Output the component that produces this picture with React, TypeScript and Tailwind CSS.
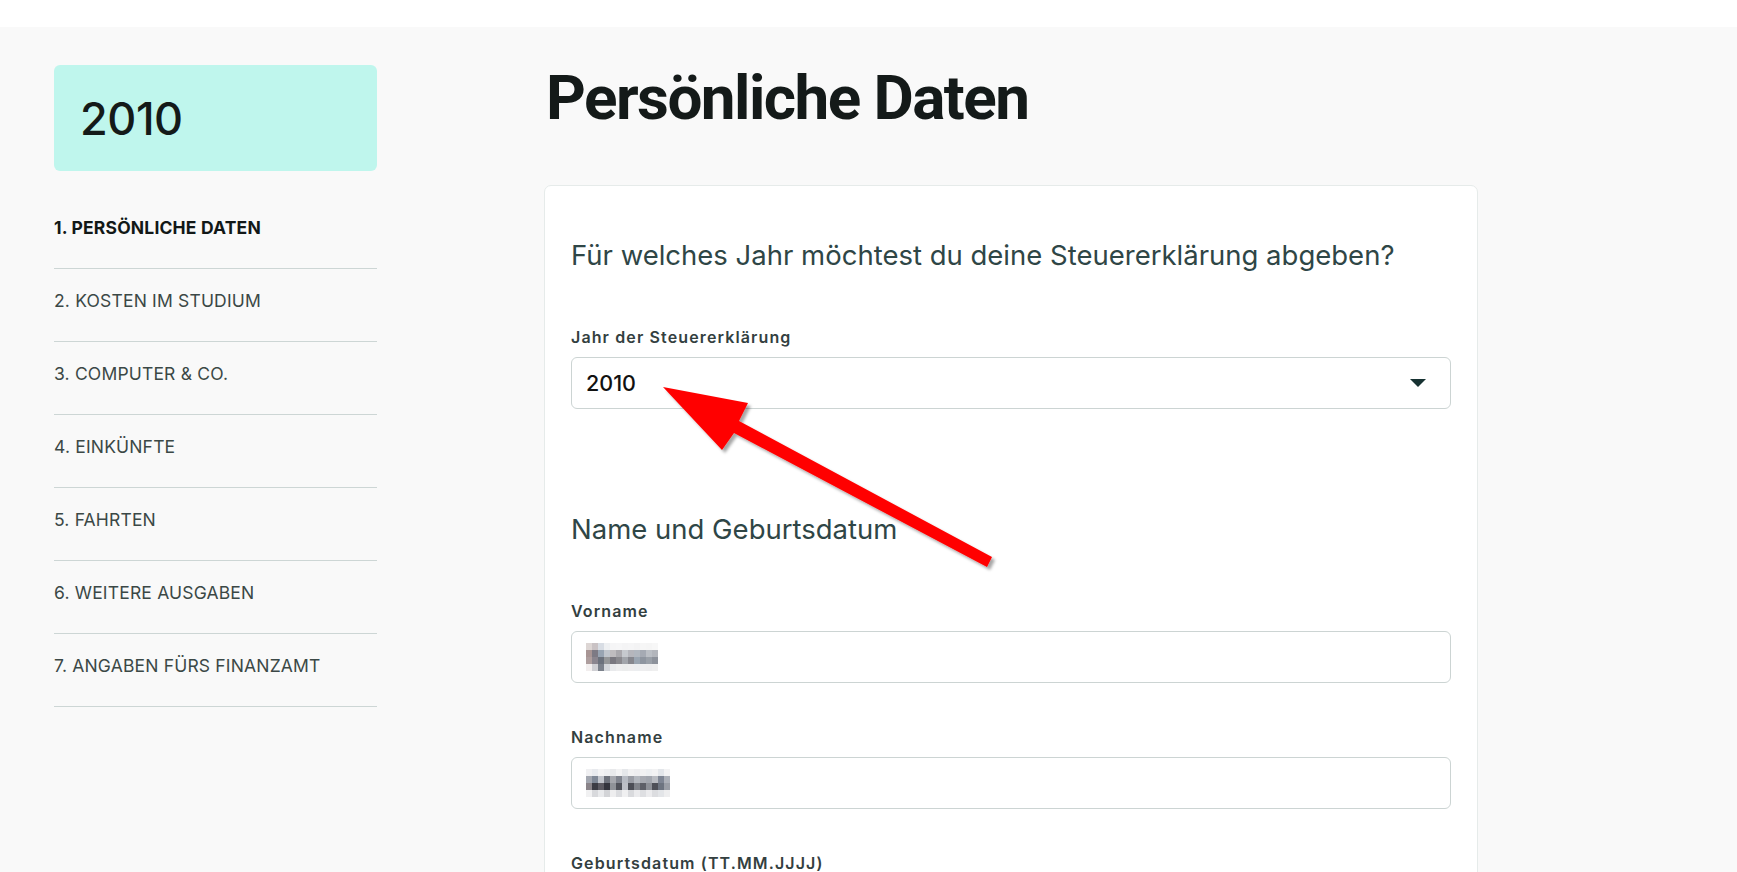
import React from 'react';

const NAV_ITEMS = [
  '1. PERSÖNLICHE DATEN',
  '2. KOSTEN IM STUDIUM',
  '3. COMPUTER & CO.',
  '4. EINKÜNFTE',
  '5. FAHRTEN',
  '6. WEITERE AUSGABEN',
  '7. ANGABEN FÜRS FINANZAMT',
];

// pixel mosaic over the blurred-out names
const MOSAIC_A = [
  ['#ddd6d4', '#c9c2c4', '#d8dde4', '#eef0f2', '#f5f5f6', '#f6f6f7', '#f4f4f5', '#f5f5f6', '#f3f3f4', '#f6f6f6', '#f5f5f5', '#f7f7f7'],
  ['#a89594', '#7d7a84', '#98a4b2', '#c0c5cc', '#bfbcbf', '#aaa8ad', '#c6c9ce', '#b5b6bc', '#b1b7bf', '#a5aab3', '#bbbfc5', '#b3b6bc'],
  ['#ae9e9e', '#8a858e', '#6b717c', '#959799', '#7a7880', '#8a898e', '#a2a5ab', '#86878e', '#9aa5b1', '#8e959f', '#9aa0a8', '#8d929b'],
  ['#f2eeee', '#cfcfd3', '#7b818b', '#d4d7db', '#e9eaec', '#eeeeef', '#eceded', '#eeeeef', '#eceef0', '#eeeeef', '#ededee', '#efefef'],
];
const MOSAIC_B = [
  ['#f0f0f2', '#e8eaee', '#f3f3f4', '#eeeff1', '#e8e9eb', '#f2f2f3', '#e5e7ea', '#f1f1f2', '#eeeef0', '#f2f2f3', '#eef0f2', '#f2f2f3', '#e3e6ea', '#f3f3f4'],
  ['#a3a7b0', '#7f8896', '#c2c5cc', '#6e727c', '#a5a7ad', '#80848e', '#b7bbc3', '#9a9da5', '#b4b8bf', '#a8abb2', '#a2a6ae', '#b8bbc1', '#7e8593', '#acb0b8'],
  ['#8a8489', '#3c3c44', '#5c5a62', '#33343d', '#8f9298', '#50525a', '#bcbfc6', '#4c4e56', '#80838a', '#5e6068', '#8d9097', '#4d4f57', '#6d7480', '#9a9ea6'],
  ['#f1f1f2', '#d8d9dc', '#e9eaec', '#d3d4d7', '#eeeeef', '#dcdde0', '#f0f0f1', '#d9dadd', '#ebebed', '#dedfe2', '#ececee', '#dcdde0', '#e3e5e8', '#eeeeef'],
];

function Mosaic({ cells, cw = 6, ch = 7 }: { cells: string[][]; cw?: number; ch?: number }) {
  const w = cells[0].length * cw;
  const h = cells.length * ch;
  return (
    <svg width={w} height={h} viewBox={`0 0 ${w} ${h}`} className="block">
      {cells.map((row, r) =>
        row.map((c, i) => <rect key={`${r}-${i}`} x={i * cw} y={r * ch} width={cw} height={ch} fill={c} />)
      )}
    </svg>
  );
}

function Field({ label, children }: { label: string; children: React.ReactNode }) {
  return (
    <div className="flex flex-col">
      <label className="text-[16px] leading-6 font-semibold tracking-[0.07em] text-[#33403f]">{label}</label>
      <div className="mt-2 h-[52px] rounded-[6px] border border-[#ccd4d3] bg-white flex items-center px-[14px]">
        {children}
      </div>
    </div>
  );
}

function RedArrow() {
  return (
    <svg
      className="pointer-events-none absolute left-0 top-0"
      width="1737"
      height="872"
      viewBox="0 0 1737 872"
    >
      <defs>
        <filter id="arrowShadow" x="-10%" y="-10%" width="130%" height="130%">
          <feDropShadow dx="3" dy="3" stdDeviation="1.6" floodColor="#000" floodOpacity="0.35" />
        </filter>
      </defs>
      <polygon
        points="663,387 748,403 739,421 992,557 987,567 734,433 722,450"
        fill="#ff0000"
        filter="url(#arrowShadow)"
      />
    </svg>
  );
}

export default function App() {
  return (
    <div className="relative min-h-[872px] w-[1737px] overflow-hidden bg-[#f9f9f9] font-['Inter',sans-serif]">
      <div className="h-[27px] bg-white" />
      <div className="flex pl-[54px]">
        {/* sidebar */}
        <aside className="w-[323px] shrink-0 pt-[38px]">
          <div className="h-[106px] rounded-[6px] bg-[#bff6ed] flex items-center px-[26px]">
            <span className="text-[45px] leading-none font-medium text-[#141a19] tracking-[-0.01em]">2010</span>
          </div>
          <nav className="mt-[25px]">
            {NAV_ITEMS.map((item, i) => (
              <div
                key={item}
                className={`border-b border-[#cdd6d5] pt-[20px] pb-[28px] text-[17.5px] leading-6 tracking-[0.01em] ${
                  i === 0 ? 'font-bold text-[#121817]' : 'font-normal text-[#3b4846]'
                }`}
              >
                {item}
              </div>
            ))}
          </nav>
        </aside>

        {/* main */}
        <main className="ml-[167px] w-[934px] shrink-0">
          <h1 className="pt-[35px] pl-[2px] text-[62px] leading-[72px] font-bold tracking-[-0.025em] text-[#141a19] font-['Roboto',sans-serif]">
            Persönliche Daten
          </h1>
          <section className="mt-[51px] rounded-[7px] border border-[#e6ebea] bg-white px-[26px] pt-[52px] pb-[40px]">
            <h2 className="text-[27.5px] leading-[34px] font-normal text-[#2f4646]">
              Für welches Jahr möchtest du deine Steuererklärung abgeben?
            </h2>
            <div className="mt-[53px]">
              <Field label="Jahr der Steuererklärung">
                <span className="flex-1 text-[21.5px] font-medium text-[#111]">2010</span>
                <svg width="16" height="8" viewBox="0 0 16 8" className="mr-[10px]">
                  <polygon points="0,0 16,0 8,8" fill="#173232" />
                </svg>
              </Field>
            </div>
            <h2 className="mt-[102px] text-[27.5px] leading-[36px] font-normal text-[#2f4646]">
              Name und Geburtsdatum
            </h2>
            <div className="mt-[52px] flex flex-col gap-[42px]">
              <Field label="Vorname">
                <Mosaic cells={MOSAIC_A} />
              </Field>
              <Field label="Nachname">
                <Mosaic cells={MOSAIC_B} />
              </Field>
              <Field label="Geburtsdatum (TT.MM.JJJJ)">
                <span className="text-[18px] text-[#111]"></span>
              </Field>
            </div>
          </section>
        </main>
      </div>
      <RedArrow />
    </div>
  );
}
